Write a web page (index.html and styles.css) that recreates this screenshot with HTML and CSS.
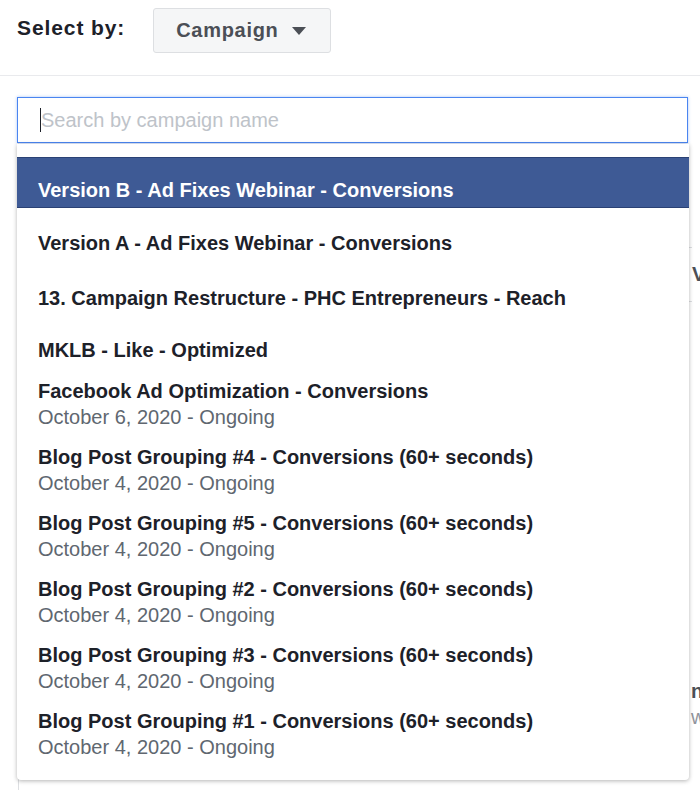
FILE: index.html
```html
<!DOCTYPE html>
<html>
<head>
<meta charset="utf-8">
<link rel="stylesheet" href="styles.css">
</head>
<body>
<div class="page">
  <div class="header">
    <span class="label">Select by:</span>
    <button class="select-btn"><span>Campaign</span><span class="caret"></span></button>
  </div>
  <div class="search-wrap">
    <div class="search"><span class="cursor"></span><span class="placeholder">Search by campaign name</span></div>
    <div class="bg-panel">
      <div class="bg-row"><span class="bg-btn">V</span></div>
      <div class="bg-item"><div class="bg-title">n</div><div class="bg-sub">w</div></div>
    </div>
    <div class="dropdown">
      <div class="item sel"><div class="title">Version B - Ad Fixes Webinar - Conversions</div></div>
      <div class="item single-a"><div class="title">Version A - Ad Fixes Webinar - Conversions</div></div>
      <div class="item single-b"><div class="title">13. Campaign Restructure - PHC Entrepreneurs - Reach</div></div>
      <div class="item single-c"><div class="title">MKLB - Like - Optimized</div></div>
      <div class="item"><div class="title">Facebook Ad Optimization - Conversions</div><div class="date">October 6, 2020 - Ongoing</div></div>
      <div class="item"><div class="title">Blog Post Grouping #4 - Conversions (60+ seconds)</div><div class="date">October 4, 2020 - Ongoing</div></div>
      <div class="item"><div class="title">Blog Post Grouping #5 - Conversions (60+ seconds)</div><div class="date">October 4, 2020 - Ongoing</div></div>
      <div class="item"><div class="title">Blog Post Grouping #2 - Conversions (60+ seconds)</div><div class="date">October 4, 2020 - Ongoing</div></div>
      <div class="item"><div class="title">Blog Post Grouping #3 - Conversions (60+ seconds)</div><div class="date">October 4, 2020 - Ongoing</div></div>
      <div class="item"><div class="title">Blog Post Grouping #1 - Conversions (60+ seconds)</div><div class="date">October 4, 2020 - Ongoing</div></div>
    </div>
  </div>
</div>
</body>
</html>
```
FILE: styles.css
```css
html, body {
  margin: 0;
  padding: 0;
  background: #ffffff;
}
body {
  width: 700px;
  height: 790px;
  overflow: hidden;
  font-family: "Liberation Sans", Arial, Helvetica, sans-serif;
}
.page {
  width: 700px;
}
.header {
  display: flex;
  align-items: center;
  gap: 28px;
  padding: 8px 17px 22px 17px;
  border-bottom: 1px solid #e9eaed;
}
.label {
  font-size: 21px;
  letter-spacing: 0.9px;
  font-weight: bold;
  color: #1d2129;
  margin-bottom: 5px;
}
.select-btn {
  display: flex;
  align-items: center;
  gap: 13px;
  height: 45px;
  box-sizing: border-box;
  padding: 0 24px 0 22px;
  background: #f5f6f7;
  border: 1px solid #dddfe2;
  border-radius: 3px;
  font-family: inherit;
  font-size: 20px;
  letter-spacing: 0.7px;
  font-weight: bold;
  color: #4b4f56;
}
.caret {
  width: 0;
  height: 0;
  border-left: 7px solid transparent;
  border-right: 7px solid transparent;
  border-top: 8px solid #4b4f56;
  margin-top: 1px;
}
.search-wrap {
  position: relative;
  padding: 21px 12px 0 17px;
}
.search {
  display: flex;
  align-items: center;
  height: 46px;
  box-sizing: border-box;
  border: 1px solid #4a85f0;
  box-shadow: 0 0 3px rgba(74, 133, 240, 0.45);
  padding-left: 22px;
  background: #fff;
}
.cursor {
  width: 1px;
  height: 24px;
  background: #1d2129;
}
.placeholder {
  font-size: 20px;
  color: #bec3c9;
}
.bg-panel {
  border-left: 1px solid #dddfe2;
  margin-left: 1px;
  height: 700px;
  padding-top: 104px;
}
.bg-row {
  height: 53px;
  border-top: 1px solid #dddfe2;
  border-bottom: 1px solid #dddfe2;
  display: flex;
  align-items: center;
  padding-left: 673px;
  font-size: 20px;
  font-weight: bold;
  color: #4b4f56;
}
.bg-item {
  margin-top: 376px;
  padding-left: 672px;
  font-size: 20px;
  line-height: 26px;
}
.bg-title {
  font-weight: bold;
  color: #4b4f56;
}
.bg-sub {
  color: #90949c;
}
.dropdown {
  position: absolute;
  top: 68px;
  left: 17px;
  width: 672px;
  height: 636px;
  box-sizing: border-box;
  background: #fff;
  border-radius: 0 0 4px 4px;
  box-shadow: 0 1px 4px rgba(0, 0, 0, 0.3);
  padding-top: 13px;
}
.item {
  padding: 7px 21px;
  line-height: 26px;
  font-size: 20px;
}
.title {
  font-weight: bold;
  color: #1d2129;
  white-space: nowrap;
}
.date {
  color: #606770;
  white-space: nowrap;
}
.item.sel {
  background: #3e5a95;
  border-top: 1px solid #2a4174;
  border-bottom: 1px solid #2a4174;
  padding-top: 19px;
  padding-bottom: 4px;
}
.item.sel .title {
  color: #ffffff;
}
.item.single-a {
  padding-top: 22px;
  padding-bottom: 22px;
}
.item.single-b {
  padding-top: 7px;
  padding-bottom: 19px;
}
.item.single-c {
  padding-top: 7px;
  padding-bottom: 8px;
}
```
